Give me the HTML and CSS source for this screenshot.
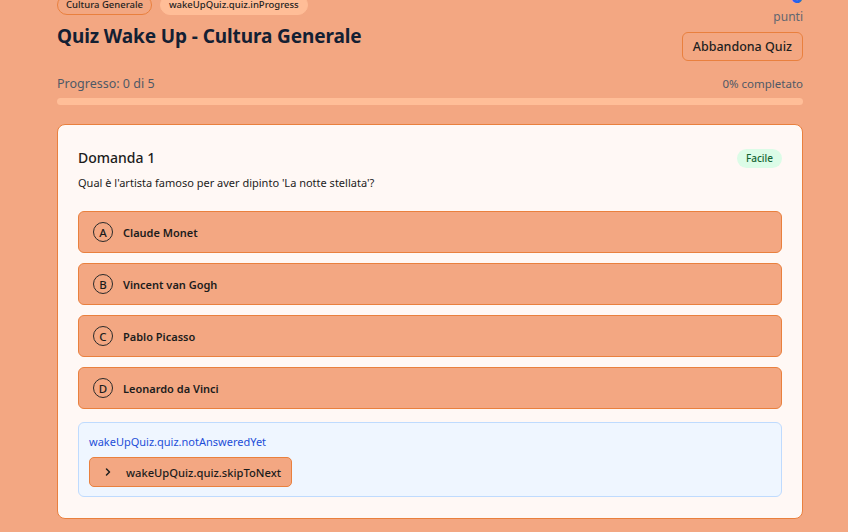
FILE: index.html
```html
<!DOCTYPE html>
<html lang="it">
<head>
<meta charset="utf-8">
<link rel="stylesheet" href="styles.css">
</head>
<body>
<div class="page">
  <header class="header">
    <div class="header-left">
      <div class="badges">
        <span class="badge badge-outline">Cultura Generale</span>
        <span class="badge badge-soft">wakeUpQuiz.quiz.inProgress</span>
      </div>
      <h1 class="title">Quiz Wake Up - Cultura Generale</h1>
    </div>
    <div class="header-right">
      <div class="score">0</div>
      <div class="score-label">punti</div>
      <button class="btn-outline">Abbandona Quiz</button>
    </div>
  </header>

  <div class="progress-info">
    <span class="progress-left">Progresso: 0 di 5</span>
    <span>0% completato</span>
  </div>
  <div class="progress-bar"><div class="progress-fill" style="width:0%"></div></div>

  <section class="card">
    <div class="card-head">
      <h2 class="q-title">Domanda 1</h2>
      <span class="difficulty">Facile</span>
    </div>
    <p class="q-text">Qual è l'artista famoso per aver dipinto 'La notte stellata'?</p>

    <div class="options">
      <button class="option"><span class="letter">A</span><span class="opt-text">Claude Monet</span></button>
      <button class="option"><span class="letter">B</span><span class="opt-text">Vincent van Gogh</span></button>
      <button class="option"><span class="letter">C</span><span class="opt-text">Pablo Picasso</span></button>
      <button class="option"><span class="letter">D</span><span class="opt-text">Leonardo da Vinci</span></button>
    </div>

    <div class="info">
      <p class="info-text">wakeUpQuiz.quiz.notAnsweredYet</p>
      <button class="btn-skip">
        <svg class="chev" width="12" height="12" viewBox="0 0 12 12" fill="none" stroke="#1f1f1f" stroke-width="1.5" stroke-linecap="round" stroke-linejoin="round"><path d="M4.5 3l3 3-3 3"/></svg>
        <span>wakeUpQuiz.quiz.skipToNext</span>
      </button>
    </div>
  </section>
</div>
</body>
</html>
```

FILE: styles.css
```css
* { box-sizing: border-box; }
html, body { margin: 0; padding: 0; }
body {
  background: #f3a782;
  font-family: "Noto Sans", "Open Sans", sans-serif;
  color: #1c1c1c;
  overflow: hidden;
}
.page {
  margin-top: -16px;
  padding: 0 45px 0 57px;
}
.header {
  display: flex;
  justify-content: space-between;
  align-items: center;
}
.badges { display: flex; gap: 8px; }
.badge {
  font-size: 9.5px;
  font-weight: 500;
  line-height: 18px;
  padding: 0 8px;
  border-radius: 999px;
  color: #1f1f1f;
}
.badge-outline { border: 1px solid #e9803e; }
.badge-soft { background: #ffbd97; border: 1px solid #ffbd97; }
.title {
  margin: 7px 0 0;
  font-size: 19px;
  font-weight: 700;
  color: #132033;
  line-height: 28px;
  letter-spacing: -0.1px;
}
.header-right {
  display: flex;
  flex-direction: column;
  align-items: flex-end;
}
.score {
  font-size: 22px;
  font-weight: 700;
  line-height: 20px;
  margin-bottom: 5px;
  color: #2563eb;
}
.score-label {
  font-size: 12px;
  color: #5f6670;
  line-height: 16px;
}
.btn-outline {
  margin-top: 7px;
  font-family: inherit;
  font-size: 12.5px;
  font-weight: 500;
  color: #1f1f1f;
  background: transparent;
  border: 1px solid #e9803e;
  border-radius: 6px;
  height: 29px;
  padding: 0 10px;
}
.progress-info {
  margin-top: 15px;
  display: flex;
  justify-content: space-between;
  font-size: 11.5px;
  color: #4f5966;
  line-height: 16px;
}
.progress-left { font-size: 12.5px; }
.progress-bar {
  margin-top: 6px;
  height: 7px;
  border-radius: 4px;
  background: #ffbe98;
  overflow: hidden;
}
.progress-fill { height: 100%; background: #e9803e; }
.card {
  margin-top: 19px;
  background: #fff8f5;
  border: 1px solid #e9803e;
  border-radius: 8px;
  padding: 22px 20px 21px;
}
.card-head {
  display: flex;
  justify-content: space-between;
  align-items: center;
}
.q-title {
  margin: 0;
  font-size: 14px;
  font-weight: 500;
  line-height: 22px;
  color: #1c1c1c;
}
.difficulty {
  font-size: 10px;
  font-weight: 500;
  line-height: 19px;
  padding: 0 9px;
  border-radius: 999px;
  background: #dcfce7;
  color: #166534;
}
.q-text {
  margin: 5px 0 0;
  font-size: 11px;
  line-height: 18px;
  color: #1c1c1c;
}
.options {
  margin-top: 19px;
  display: flex;
  flex-direction: column;
  gap: 10px;
}
.option {
  display: flex;
  align-items: center;
  gap: 10px;
  height: 42px;
  padding: 0 14px;
  background: #f3a782;
  border: 1px solid #e9803e;
  border-radius: 6px;
  font-family: inherit;
  text-align: left;
  color: #1c1c1c;
}
.letter {
  width: 20px;
  height: 20px;
  border: 1px solid #2a2a2a;
  border-radius: 50%;
  display: flex;
  align-items: center;
  justify-content: center;
  font-size: 11.5px;
  font-weight: 500;
}
.opt-text {
  font-size: 11px;
  font-weight: 600;
}
.info {
  margin-top: 13px;
  background: #eff6ff;
  border: 1px solid #bfdbfe;
  border-radius: 6px;
  padding: 10px 10px 9px;
}
.info-text {
  margin: 0;
  font-size: 11px;
  line-height: 18px;
  color: #1d4ed8;
}
.btn-skip {
  margin-top: 6px;
  display: flex;
  align-items: center;
  gap: 12px;
  height: 30px;
  padding: 0 10px 0 12px;
  background: #f3a782;
  border: 1px solid #e9803e;
  border-radius: 5px;
  font-family: inherit;
  font-size: 11.2px;
  font-weight: 500;
  color: #1c1c1c;
}
.chev { display: block; }
```
